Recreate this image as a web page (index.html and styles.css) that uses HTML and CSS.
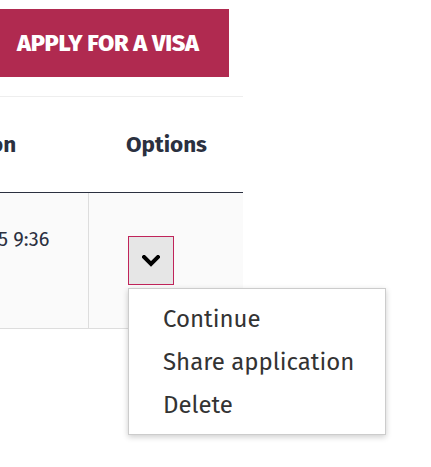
FILE: index.html
```html
<!DOCTYPE html>
<html>
<head>
<meta charset="utf-8">
<link rel="stylesheet" href="styles.css">
</head>
<body>
<div class="page">
  <div class="toolbar">
    <button class="apply">APPLY FOR A VISA</button>
  </div>
  <div class="table">
    <div class="head">
      <div class="th th-first">on</div>
      <div class="th th-opt">Options</div>
    </div>
    <div class="row">
      <div class="td td-first">5 9:36</div>
      <div class="td td-opt">
        <div class="dd">
          <button class="dd-btn" aria-label="Options">
            <svg width="18" height="12" viewBox="0 0 18 12"><polyline points="2,2 9,9 16,2" fill="none" stroke="#000" stroke-width="4" stroke-linecap="square"/></svg>
          </button>
          <ul class="menu">
            <li>Continue</li>
            <li>Share application</li>
            <li>Delete</li>
          </ul>
        </div>
      </div>
    </div>
  </div>
</div>
</body>
</html>
```
FILE: styles.css
```css
html, body { margin: 0; padding: 0; background: #fff; }
body { font-family: "Fira Sans", "Open Sans", "Noto Sans", sans-serif; color: #2b3040; min-height: 467px; }
.page { width: 243px; min-height: 467px; }
.toolbar { padding-top: 9px; }
.apply {
  display: block; width: 229px; height: 68px; border: 0; margin: 0;
  background: #b02a50; color: #fff; font-family: inherit;
  font-weight: 800; font-size: 23.5px; letter-spacing: -0.3px;
  text-align: left; padding: 0 0 0 17px;
}
.table { margin-top: 19px; border-top: 1px solid #eeeeee; }
.head { display: flex; height: 95px; border-bottom: 1px solid #2b3040; }
.th { font-weight: 700; font-size: 22.5px; display: flex; align-items: center; }
.th-first { width: 90px; margin-left: -10px; overflow: visible; white-space: nowrap; }
.th-opt { flex: 1; justify-content: center; margin-left: 10px; }
.row { display: flex; height: 135px; background: #fafafa; border-bottom: 1px solid #dddddd; }
.td { font-size: 20px; }
.td-first { border-right: 1px solid #dddddd; padding-top: 34px; margin-left: -2px; box-sizing: border-box; flex: 0 0 91px; }
.td-opt { flex: 1; padding: 43px 0 0 39px; }
.dd { position: relative; }
.dd-btn {
  box-sizing: border-box; width: 46px; height: 49px; margin: 0; padding: 0;
  background: #e6e6e6; border: 1px solid #c0245a;
  display: flex; align-items: center; justify-content: center;
}
.menu {
  position: absolute; left: 0; top: 52px; width: 258px; height: 147px;
  margin: 0; padding: 9px 0 0 0; list-style: none; background: #fff;
  border: 1px solid #cccccc; box-shadow: 0 2px 6px rgba(0,0,0,0.2);
  box-sizing: border-box; z-index: 2;
}
.menu li { font-size: 24px; color: #333; padding-left: 34px; height: 43px; line-height: 43px; }
```
